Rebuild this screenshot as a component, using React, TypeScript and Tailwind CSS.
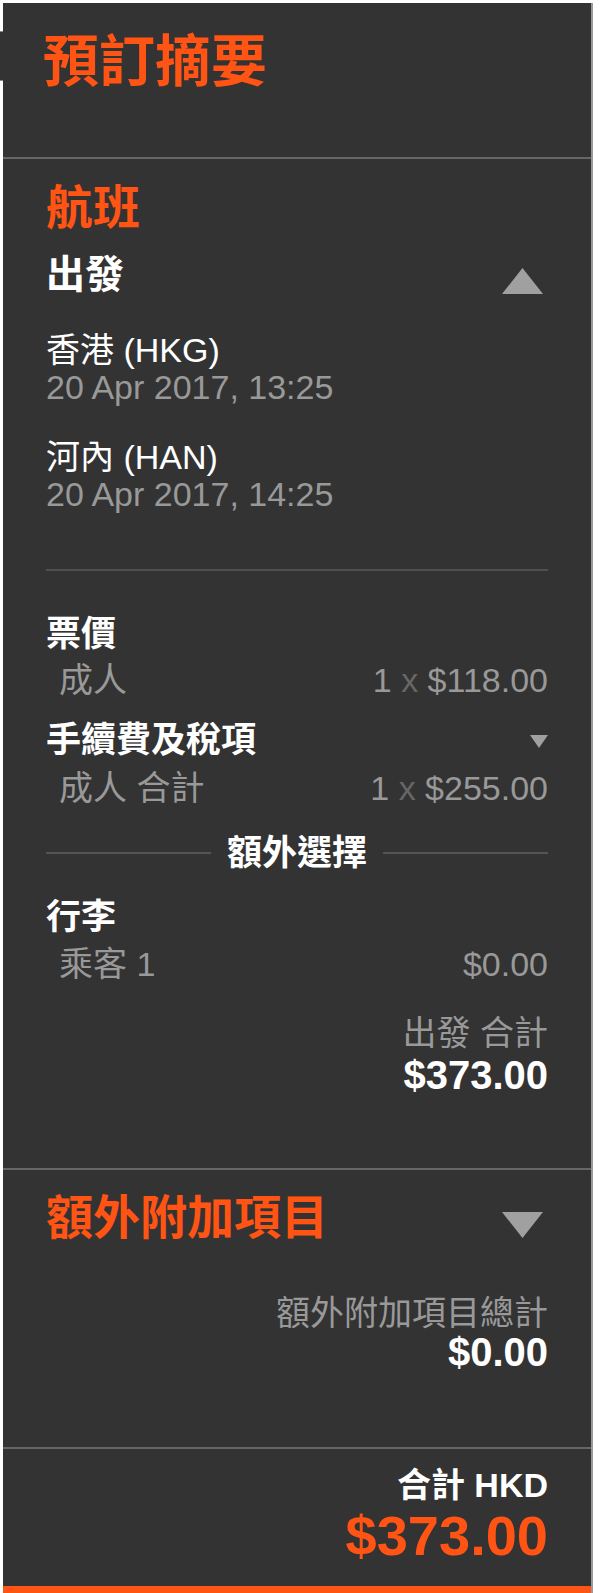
import React from "react";

function TriUp({ className = "" }: { className?: string }) {
  return (
    <svg width="41" height="26" viewBox="0 0 41 26" className={className}>
      <polygon points="20.5,0 41,26 0,26" fill="#a0a0a0" />
    </svg>
  );
}

function TriDown({ className = "" }: { className?: string }) {
  return (
    <svg width="41" height="26" viewBox="0 0 41 26" className={className}>
      <polygon points="0,0 41,0 20.5,26" fill="#a0a0a0" />
    </svg>
  );
}

function TriDownSmall({ className = "" }: { className?: string }) {
  return (
    <svg width="18" height="13" viewBox="0 0 18 13" className={className}>
      <polygon points="0,0 18,0 9,13" fill="#a0a0a0" />
    </svg>
  );
}

function PriceRow({ label, qty, price }: { label: string; qty?: string; price: string }) {
  return (
    <div className="flex h-[37px] items-center justify-between pl-[13px] text-[34px] leading-[37px] text-[#999]">
      <span>{label}</span>
      <span>
        {qty ? (
          <>
            {qty} <span className="text-[#666]">x</span>{" "}
          </>
        ) : null}
        {price}
      </span>
    </div>
  );
}

export default function App() {
  return (
    <div className="relative min-h-[1593px] bg-white pt-[3px] pl-[3px] font-['Liberation_Sans','Noto_Sans_CJK_TC',sans-serif]">
      <div className="absolute left-0 top-[31px] h-[50px] w-[3px] border-y border-[#8a8a8a] bg-[#333]" />
      <div className="w-[590px] border-r-2 border-[#9a9a9a] bg-[#333]">
        {/* Header */}
        <div className="h-[154px] pl-[40px] pt-[31px]">
          <div className="text-[56px] font-bold leading-[56px] text-[#ff5414]">預訂摘要</div>
        </div>
        <div className="h-[2px] bg-[#666]" />

        {/* Flight */}
        <div className="px-[43px] pt-[25px] pb-[74px]">
          <div className="h-[47px] text-[47px] font-bold leading-[47px] text-[#ff5414]">航班</div>
          <div className="mt-[25px] flex h-[38px] items-end justify-between">
            <span className="text-[39px] font-bold leading-[38px] text-white">出發</span>
            <TriUp className="mr-[5px]" />
          </div>

          <div className="mt-[38px] h-[37px] text-[34px] leading-[37px] text-white">香港 (HKG)</div>
          <div className="h-[37px] text-[34px] leading-[37px] text-[#999]">20 Apr 2017, 13:25</div>
          <div className="mt-[33px] h-[37px] text-[34px] leading-[37px] text-white">河內 (HAN)</div>
          <div className="h-[37px] text-[34px] leading-[37px] text-[#999]">20 Apr 2017, 14:25</div>

          <div className="mt-[56px] h-[2px] bg-[#4f4f4f]" />

          <div className="mt-[46px] h-[34px] text-[35px] font-bold leading-[34px] text-white">票價</div>
          <div className="mt-[11px]">
            <PriceRow label="成人" qty="1" price="$118.00" />
          </div>

          <div className="mt-[24px] flex h-[34px] items-start justify-between">
            <span className="text-[35px] font-bold leading-[34px] text-white">手續費及稅項</span>
            <TriDownSmall className="mt-[12px]" />
          </div>
          <div className="mt-[13px]">
            <PriceRow label="成人 合計" qty="1" price="$255.00" />
          </div>

          <div className="mt-[29px] flex h-[34px] items-center gap-[16px]">
            <div className="h-[2px] flex-1 bg-[#555]" />
            <span className="text-[35px] font-bold leading-[34px] text-white">額外選擇</span>
            <div className="h-[2px] flex-1 bg-[#555]" />
          </div>

          <div className="mt-[30px] h-[34px] text-[35px] font-bold leading-[34px] text-white">行李</div>
          <div className="mt-[12px]">
            <PriceRow label="乘客 1" price="$0.00" />
          </div>

          <div className="mt-[32px] h-[37px] text-right text-[34px] leading-[37px] text-[#999]">出發 合計</div>
          <div className="mt-[4px] h-[38px] text-right text-[40px] font-bold leading-[38px] text-white">$373.00</div>
        </div>
        <div className="h-[2px] bg-[#666]" />

        {/* Add-ons */}
        <div className="px-[43px] pt-[24px] pb-[76px]">
          <div className="flex h-[47px] items-start justify-between">
            <span className="text-[47px] font-bold leading-[47px] text-[#ff5414]">額外附加項目</span>
            <TriDown className="mr-[5px] mt-[18px]" />
          </div>
          <div className="mt-[54px] h-[37px] text-right text-[34px] leading-[37px] text-[#999]">額外附加項目總計</div>
          <div className="mt-[1px] h-[38px] text-right text-[40px] font-bold leading-[38px] text-white">$0.00</div>
        </div>
        <div className="h-[2px] bg-[#666]" />

        {/* Total */}
        <div className="px-[43px] pt-[18px] pb-[22px]">
          <div className="h-[37px] text-right text-[34px] font-bold leading-[37px] text-white">合計 HKD</div>
          <div className="mt-[4px] h-[56px] text-right text-[56px] font-bold leading-[56px] text-[#ff5414]">$373.00</div>
        </div>
        <div className="h-[9px] bg-[#ff5414]" />
      </div>
    </div>
  );
}
